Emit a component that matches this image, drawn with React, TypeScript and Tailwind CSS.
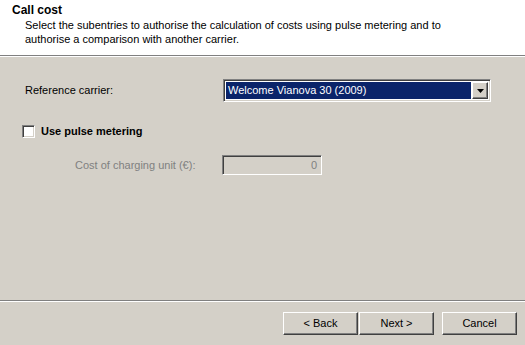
import React, { useState } from "react";

const raised =
  "border border-t-white border-l-white border-r-[#404040] border-b-[#404040] shadow-[inset_-1px_-1px_0_#808080,inset_1px_1px_0_#d4d0c8]";
const sunken =
  "border border-t-[#808080] border-l-[#808080] border-r-white border-b-white shadow-[inset_1px_1px_0_#404040,inset_-1px_-1px_0_#d4d0c8]";

function WizButton({ label }: { label: string }) {
  return (
    <button
      className={`h-[23px] w-[75px] bg-[#d4d0c8] text-black ${raised}`}
      type="button"
    >
      {label}
    </button>
  );
}

function App() {
  const [pulse, setPulse] = useState(false);

  return (
    <div className="flex h-[345px] w-[525px] flex-col bg-[#d4d0c8] font-['Liberation_Sans',sans-serif] text-[11px] text-black">
      {/* header */}
      <div className="h-[55px] bg-white pl-[12px] pt-[3px]">
        <div className="text-[12px] font-bold leading-[15px]">Call cost</div>
        <div className="pl-[13px] leading-[14px]">
          Select the subentries to authorise the calculation of costs using
          pulse metering and to
          <br />
          authorise a comparison with another carrier.
        </div>
      </div>
      <div className="h-px bg-[#808080]" />
      <div className="h-px bg-white" />

      {/* content */}
      <div className="flex-1 pt-[22px]">
        <div className="flex h-[23px] items-center">
          <div className="w-[223px] pl-[25px]">Reference carrier:</div>
          <div className={`flex h-[23px] w-[268px] bg-white p-[2px] ${sunken}`}>
            <div className="mr-px flex flex-1 items-center bg-[#0a246a] px-[2px] text-white">
              Welcome Vianova 30 (2009)
            </div>
            <div
              className={`flex h-[17px] w-[16px] items-center justify-center bg-[#d4d0c8] ${raised}`}
            >
              <svg width="7" height="4" viewBox="0 0 7 4">
                <path d="M0 0h7L3.5 4z" fill="#000" />
              </svg>
            </div>
          </div>
        </div>

        <div className="mt-[23px] flex h-[13px] items-center pl-[22px]">
          <button
            type="button"
            onClick={() => setPulse(!pulse)}
            className={`h-[13px] w-[13px] bg-white ${sunken}`}
          >
            {pulse && (
              <svg width="7" height="7" viewBox="0 0 7 7" className="m-auto">
                <path d="M0 3l2 2 5-5v2L2 7 0 5z" fill="#000" />
              </svg>
            )}
          </button>
          <span className="ml-[6px] font-bold">Use pulse metering</span>
        </div>

        <div className="mt-[17px] flex h-[20px] items-center">
          <div className="w-[222px] pl-[75px] text-[#808080]">
            Cost of charging unit (€):
          </div>
          <div
            className={`flex h-[20px] w-[100px] items-center justify-end bg-[#d4d0c8] pr-[4px] text-[#808080] ${sunken}`}
          >
            0
          </div>
        </div>
      </div>

      {/* footer */}
      <div className="h-px bg-[#808080]" />
      <div className="h-px bg-white" />
      <div className="flex h-[43px] justify-end pr-[8px] pt-[10px]">
        <WizButton label="< Back" />
        <div className="ml-px">
          <WizButton label="Next >" />
        </div>
        <div className="ml-[8px]">
          <WizButton label="Cancel" />
        </div>
      </div>
    </div>
  );
}

export default App;
